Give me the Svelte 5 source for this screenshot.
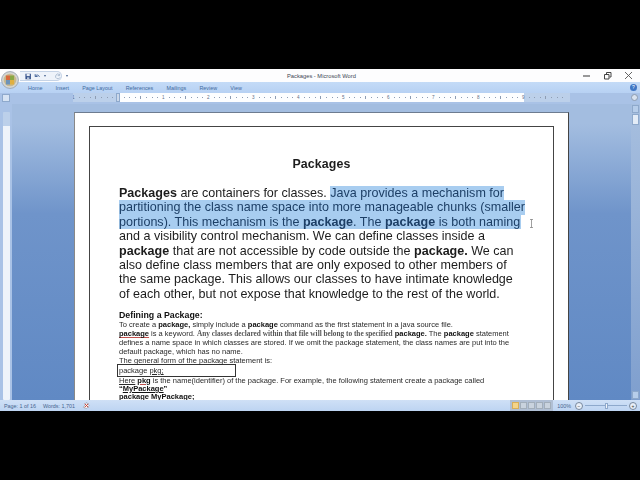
<script>
	const tabs = ["Home", "Insert", "Page Layout", "References", "Mailings", "Review", "View"];
	const ticks = Array.from({ length: 88 }, (_, i) => {
		const inch = (i - 8) / 8;
		if (i === 8) return { handle: true };
		if (i % 8 === 0) return { label: String(Math.abs(inch)) };
		return { tall: i % 4 === 0 };
	});
</script>

<div class="screen">
	<div class="window">
		<header class="titlebar">
			<div class="office-button">
				<svg viewBox="0 0 20 20" width="18" height="18">
					<circle cx="10" cy="10" r="9.4" fill="#d5d6d2" stroke="#8d99a8" stroke-width="0.8" />
					<circle cx="10" cy="10" r="7" fill="#c9b98e" />
					<rect x="5.5" y="5" width="4.5" height="5" fill="#d9693c" />
					<rect x="10" y="5" width="4.5" height="5" fill="#8aa845" />
					<rect x="5.5" y="10" width="4.5" height="5" fill="#6d93b8" />
					<rect x="10" y="10" width="4.5" height="5" fill="#e0b040" />
				</svg>
			</div>
			<div class="qat">
				<svg viewBox="0 0 8 8" width="7" height="7">
					<path d="M0.5 0.5h7v7h-7z" fill="#39558f" />
					<path d="M2 0.5h4v3H2z" fill="#e8eef6" />
					<path d="M2.5 5h3v2.5h-3z" fill="#b9c6d8" />
				</svg>
				<svg viewBox="0 0 8 8" width="7" height="7">
					<path d="M1.5 1v3h3M1.8 3.8C3 1.5 6 1.5 6.8 4.5" fill="none" stroke="#3f6097" stroke-width="1.2" />
				</svg>
				<span class="caret"></span>
				<svg class="redo" viewBox="0 0 8 8" width="7" height="7">
					<path d="M5.5 1.5A3 3 0 1 0 6.5 5M5.8 0.5v2.4H3.4" fill="none" stroke="#9fb1c8" stroke-width="1" />
				</svg>
			</div>
			<span class="caret qat-more"></span>
			<span class="title">Packages - Microsoft Word</span>
			<div class="controls">
				<svg viewBox="0 0 9 9" width="9" height="9"><path d="M1 5h7" stroke="#555" stroke-width="1.2" /></svg>
				<svg viewBox="0 0 9 9" width="9" height="9">
					<path d="M1.5 3.5h4.5v4.5H1.5zM3.5 3V1.5H8V6H6.5" fill="none" stroke="#444" stroke-width="1" />
				</svg>
				<svg viewBox="0 0 9 9" width="9" height="9"><path d="M1 1l7 7M8 1l-7 7" stroke="#555" stroke-width="0.9" /></svg>
			</div>
		</header>

		<nav class="tabs">
			{#each tabs as tab}
				<span class="tab">{tab}</span>
			{/each}
			<span class="help">?</span>
		</nav>

		<div class="ruler-row">
			<div class="ruler-corner"><span></span></div>
			<div class="ruler">
				{#each ticks as tick}
					<span class="cell">
						{#if tick.handle}
							<i class="handle"></i>
						{:else if tick.label}
							{tick.label}
						{:else}
							<i class:tall={tick.tall}></i>
						{/if}
					</span>
				{/each}
			</div>
			<div class="view-ruler"><span></span></div>
		</div>

		<div class="main">
			<div class="v-ruler"><span></span></div>
			<div class="workspace">
				<div class="page">
					<article class="sheet">
						<h1>Packages</h1>
						<p class="lead">
							<span class="ln"><b>Packages</b> are containers for classes. <span class="sel">Java provides a mechanism for</span></span>
							<span class="ln sel full">partitioning the class name space into more manageable chunks (smaller</span>
							<span class="ln sel third">portions). This mechanism is the <b>package</b>. The <b>package</b> is both naming</span>
							<span class="ln">and a visibility control mechanism. We can define classes inside a</span>
							<span class="ln"><b>package</b> that are not accessible by code outside the <b>package.</b> We can</span>
							<span class="ln">also define class members that are only exposed to other members of</span>
							<span class="ln">the same package. This allows our classes to have intimate knowledge</span>
							<span class="ln">of each other, but not expose that knowledge to the rest of the world.</span>
						</p>
						<h2>Defining a Package:</h2>
						<div class="small">
							<span class="ln">To create a <b>package,</b> simply include a <b>package</b> command as the first statement in a java source file.</span>
							<span class="ln"><b class="wavy">package</b> is a keyword. <span class="serif">Any classes declared within that file will belong to the specified</span> <b>package.</b> The <b>package</b> statement</span>
							<span class="ln">defines a name space in which classes are stored. If we omit the package statement, the class names are put into the</span>
							<span class="ln">default package, which has no name.</span>
							<span class="ln">The general form of the package statement is:</span>
							<span class="code">package <u>pkg;</u></span>
							<span class="ln"><u>Here</u> <b class="wavy">pkg</b> is the name(identifier) of the package. For example, the following statement create a package called</span>
							<span class="ln tight"><b>“<u>MyPackage</u>”</b></span>
							<span class="ln tight"><b>package <u>MyPackage</u>;</b></span>
						</div>
					</article>
				</div>
				<svg class="ibeam" viewBox="0 0 5 9" width="5" height="9">
					<path d="M1 0.5h3M2.5 0.5v8M1 8.5h3" fill="none" stroke="#777" stroke-width="0.7" />
				</svg>
			</div>
			<div class="scrollbar">
				<span class="arrow"></span>
				<span class="thumb"></span>
				<span class="grow"></span>
				<span class="arrow"></span>
			</div>
		</div>

		<footer class="status">
			<span>Page: 1 of 16</span>
			<span>Words: 1,701</span>
			<svg viewBox="0 0 10 10" width="9" height="9">
				<path d="M1.5 7L5 1.5 8 5 5 8.5z" fill="#f4f4f2" stroke="#8f98a8" stroke-width="0.7" />
				<path d="M3 3l4 4M7 3L3 7" stroke="#c8392f" stroke-width="1" />
			</svg>
			<div class="grow"></div>
			<div class="views">
				<span class="view on"></span>
				<span class="view"></span>
				<span class="view"></span>
				<span class="view"></span>
				<span class="view"></span>
			</div>
			<span class="zoom-label">100%</span>
			<span class="zoom-btn out">−</span>
			<div class="slider"><span></span></div>
			<span class="zoom-btn in">+</span>
		</footer>
	</div>
</div>

<style>
	:global(body) {
		margin: 0;
		background: #000;
	}

	.screen {
		width: 640px;
		height: 480px;
		padding: 69px 0;
		box-sizing: border-box;
		background: #000;
		overflow: hidden;
		font-family: "Liberation Sans", Arial, sans-serif;
	}

	.window {
		height: 342px;
		display: flex;
		flex-direction: column;
		position: relative;
		background: #a3bde0;
	}

	.titlebar {
		height: 13px;
		flex: none;
		display: flex;
		align-items: center;
		background: #fdfdfe;
		padding-left: 20px;
	}

	.office-button {
		position: absolute;
		left: 1px;
		top: 2px;
		width: 18px;
		height: 18px;
		z-index: 2;
	}

	.qat {
		width: 42px;
		height: 10px;
		margin-top: 1px;
		box-sizing: border-box;
		border: 1px solid #c5d3e6;
		border-left: none;
		border-radius: 0 6px 6px 0;
		background: #eef3fa;
		display: flex;
		align-items: center;
		gap: 3px;
		padding-left: 5px;
	}

	.redo {
		margin-left: 6px;
	}

	.caret {
		width: 0;
		height: 0;
		border-left: 1.5px solid transparent;
		border-right: 1.5px solid transparent;
		border-top: 2px solid #44618f;
	}

	.qat-more {
		margin-left: 4px;
	}

	.title {
		position: absolute;
		left: 287px;
		top: 3px;
		font-size: 5.75px;
		line-height: 9px;
		color: #3c4654;
	}

	.controls {
		margin-left: auto;
		display: flex;
		gap: 12px;
		padding-right: 7px;
	}

	.tabs {
		height: 11px;
		flex: none;
		display: flex;
		align-items: center;
		padding-left: 28px;
		gap: 13.2px;
		background: linear-gradient(#c4dbf7, #b7d1f3);
	}

	.tab {
		font-size: 5.4px;
		color: #3f6aa0;
	}

	.help {
		margin-left: auto;
		margin-right: 3px;
		width: 7px;
		height: 7px;
		border-radius: 50%;
		background: #3f76c4;
		color: #fff;
		font-size: 5px;
		line-height: 7px;
		text-align: center;
	}

	.ruler-row {
		height: 11px;
		flex: none;
		display: flex;
		background: #a9c2e6;
	}

	.ruler-corner {
		width: 73px;
		flex: none;
		padding: 1px 0 0 2px;
		box-sizing: border-box;
	}

	.ruler-corner span {
		display: block;
		width: 8px;
		height: 8px;
		background: #d6e3f3;
		border: 1px solid #8ea9cc;
		box-sizing: border-box;
	}

	.ruler {
		width: 497px;
		height: 9px;
		flex: none;
		display: flex;
		overflow: hidden;
		background: linear-gradient(90deg, #bcd0ea 45px, #fdfeff 45px, #fdfeff 451px, #bcd0ea 451px);
	}

	.cell {
		width: 5.625px;
		flex: none;
		display: flex;
		align-items: center;
		justify-content: center;
		font-size: 4.6px;
		color: #5d6f88;
	}

	.cell:first-child {
		margin-left: -2.6px;
	}

	.cell i {
		display: block;
		width: 0.7px;
		height: 1px;
		background: #8e9db3;
	}

	.cell i.tall {
		height: 3px;
	}

	.cell i.handle {
		width: 4px;
		height: 9px;
		flex: none;
		background: #cbd8ea;
		border: 1px solid #8ea9cc;
		box-sizing: border-box;
	}

	.view-ruler {
		flex: 1;
		display: flex;
		justify-content: flex-end;
		padding: 1px 2px 0 0;
	}

	.view-ruler span {
		width: 7px;
		height: 7px;
		border-radius: 50%;
		background: #d8e2ee;
		border: 1px solid #8d9cb0;
		box-sizing: border-box;
	}

	.main {
		flex: 1;
		min-height: 0;
		display: flex;
	}

	.v-ruler {
		width: 12px;
		flex: none;
		padding: 8px 2px 0 3px;
		box-sizing: border-box;
		background: #a9c2e6;
	}

	.v-ruler span {
		display: block;
		height: 100%;
		background: linear-gradient(#bcd0ea 14px, #eef3fa 14px);
		border-radius: 1px;
	}

	.workspace {
		flex: 1;
		min-width: 0;
		position: relative;
		overflow: hidden;
		padding: 8px 0 0 62px;
		background: linear-gradient(#a3bde0 20px, #6f94ca 110px, #6089c4);
	}

	.page {
		width: 495px;
		height: 400px;
		padding: 13px 0 0 14px;
		box-sizing: border-box;
		background: #fff;
		border-top: 1px solid #6d7c90;
		border-right: 1px solid #444;
		border-left: 1px solid #888;
	}

	.sheet {
		width: 465px;
		height: 400px;
		box-sizing: border-box;
		border: 1px solid #444;
		padding: 29px 0 0 29px;
		color: #1c1c1c;
		filter: blur(0.25px);
	}

	h1 {
		margin: 0 0 14px;
		width: 405px;
		text-align: center;
		font-size: 12.4px;
		line-height: 16px;
		letter-spacing: 0.1px;
	}

	.lead {
		margin: 0 0 9px;
		font-size: 12.55px;
		line-height: 14.4px;
	}

	.ln {
		display: block;
		white-space: nowrap;
	}

	.ln.tight {
		line-height: 8.5px;
	}

	.sel {
		background: #a8cdf0;
		color: #1d3f66;
		display: inline-block;
	}

	.full {
		display: block;
		width: 406px;
	}

	.third {
		display: block;
		width: 402px;
	}

	h2 {
		margin: 0;
		font-size: 8.8px;
		line-height: 10px;
		color: #111;
	}

	.small {
		font-size: 7.5px;
		line-height: 9px;
		color: #2a2a2a;
	}

	.small b {
		color: #111;
	}

	.serif {
		font-family: "Liberation Serif", serif;
		font-size: 7.3px;
		font-weight: 700;
		color: #555;
	}

	.wavy {
		text-decoration: underline;
		text-decoration-color: #c0504d;
	}

	.code {
		display: block;
		width: 119px;
		height: 13px;
		margin: -1.5px 0 -1px -2px;
		padding-left: 1px;
		box-sizing: border-box;
		border: 1px solid #333;
		line-height: 11px;
		white-space: nowrap;
	}

	.ibeam {
		position: absolute;
		left: 517px;
		top: 115px;
	}

	.scrollbar {
		width: 9px;
		flex: none;
		padding: 1px 1px;
		box-sizing: border-box;
		display: flex;
		flex-direction: column;
		gap: 1px;
		background: linear-gradient(#a7bfdf, #7f9fce);
	}

	.arrow {
		height: 8px;
		flex: none;
		background: #b6cdea;
		border: 1px solid #8ea9cc;
		box-sizing: border-box;
	}

	.thumb {
		height: 11px;
		flex: none;
		background: #e3ecf7;
		border: 1px solid #8ea9cc;
		box-sizing: border-box;
	}

	.scrollbar .grow,
	.status .grow {
		flex: 1;
	}

	.status {
		height: 11px;
		flex: none;
		display: flex;
		align-items: center;
		gap: 7px;
		padding-left: 4px;
		font-size: 5.4px;
		color: #46658f;
		background: linear-gradient(#cfe0f6, #bdd4f2);
	}

	.views {
		display: flex;
		height: 11px;
		align-items: center;
		gap: 1px;
		padding: 0 2px;
		background: #b0bfd4;
		width: 43px;
		box-sizing: border-box;
	}

	.view {
		width: 7px;
		height: 7px;
		background: #c9d3de;
		border: 1px solid #a2aeba;
		box-sizing: border-box;
	}

	.view.on {
		background: #f4d489;
		border-color: #d6ae5b;
	}

	.zoom-label {
		margin-left: -3px;
	}

	.zoom-btn {
		width: 6px;
		height: 6px;
		border-radius: 50%;
		background: #e8eff8;
		border: 1px solid #76879d;
		font-size: 5px;
		line-height: 6px;
		text-align: center;
		color: #333;
	}

	.zoom-btn.out {
		margin: 0 -5px 0 -3px;
	}

	.zoom-btn.in {
		margin: 0 3px 0 -5px;
	}

	.slider {
		width: 42px;
		height: 1px;
		background: #8ea9cc;
		display: flex;
		justify-content: center;
		align-items: center;
	}

	.slider span {
		width: 3px;
		height: 6px;
		flex: none;
		background: #eef3fa;
		border: 1px solid #8ea9cc;
		box-sizing: border-box;
	}
</style>
